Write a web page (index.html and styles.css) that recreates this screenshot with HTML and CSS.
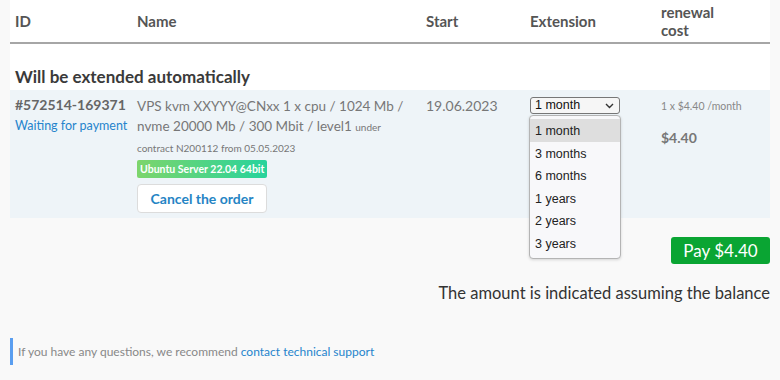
FILE: index.html
```html
<!DOCTYPE html>
<html lang="en">
<head>
  <meta charset="UTF-8">
  <meta name="viewport" content="width=device-width, initial-scale=1.0">
  <title>Orders</title>
  <link rel="stylesheet" href="styles.css">
</head>
<body>
  <div class="page">
    <table class="orders">
      <colgroup>
        <col class="col-id">
        <col class="col-name">
        <col class="col-start">
        <col class="col-ext">
        <col class="col-cost">
      </colgroup>
      <thead>
        <tr>
          <th>ID</th>
          <th>Name</th>
          <th>Start</th>
          <th>Extension</th>
          <th>renewal<br>cost</th>
        </tr>
      </thead>
      <tbody>
        <tr class="group-row">
          <td colspan="5">Will be extended automatically</td>
        </tr>
        <tr class="order-row">
          <td class="id-cell">
            <div class="order-id">#572514-169371</div>
            <a class="status" href="#">Waiting for payment</a>
          </td>
          <td>
            <div class="order-name">VPS kvm XXYYY@CNxx 1 x cpu / 1024 Mb / nvme 20000 Mb / 300 Mbit / level1 <span class="small">under contract N200112 from 05.05.2023</span></div>
            <div class="os-badge">Ubuntu Server 22.04 64bit</div>
            <button class="btn-cancel">Cancel the order</button>
          </td>
          <td class="start">19.06.2023</td>
          <td>
            <div class="select-wrap">
              <div class="select">
                <span>1 month</span>
                <svg width="9" height="6" viewBox="0 0 9 6"><path d="M1 1l3.5 3.5L8 1" fill="none" stroke="#333" stroke-width="1.4"/></svg>
              </div>
              <ul class="select-menu">
                <li class="active">1 month</li>
                <li>3 months</li>
                <li>6 months</li>
                <li>1 years</li>
                <li>2 years</li>
                <li>3 years</li>
              </ul>
            </div>
          </td>
          <td>
            <div class="per-month">1 x $4.40 /month</div>
            <div class="total">$4.40</div>
          </td>
        </tr>
      </tbody>
    </table>

    <div class="pay-row">
      <button class="btn-pay">Pay $4.40</button>
    </div>
    <p class="balance-note">The amount is indicated assuming the balance</p>

    <div class="help-note">If you have any questions, we recommend <a href="#">contact technical support</a></div>
  </div>
</body>
</html>
```

FILE: styles.css
```css
body {
  font-family: Lato, "Open Sans", sans-serif;
  margin: 0;
  padding: 0;
  background-color: #f9f9f9;
  color: #555;
}
.page {
  padding: 0 10px;
}
.orders {
  width: 100%;
  border-collapse: collapse;
  table-layout: fixed;
  background: #fff;
}
.col-id { width: 122px; }
.col-name { width: 289px; }
.col-start { width: 104px; }
.col-ext { width: 131px; }
.col-cost { width: 114px; }
.orders th {
  height: 42px;
  padding: 0 5px;
  text-align: left;
  vertical-align: middle;
  font-size: 15px;
  font-weight: bold;
  line-height: 18px;
  color: #555;
  border-bottom: 2px solid #a6a6a6;
}
.orders td {
  padding: 6px 5px 5px;
  vertical-align: top;
  font-size: 14px;
  line-height: 20px;
}
.group-row td {
  padding: 22px 5px 2px;
  font-size: 17px;
  font-weight: bold;
  color: #3a3a3a;
  line-height: 22px;
}
.order-row td {
  background: #eef4f8;
  color: #777;
}
.id-cell {
  white-space: nowrap;
}
.order-id {
  font-weight: bold;
  font-size: 14px;
  color: #666;
  line-height: 18px;
}
.status {
  display: block;
  color: #2584cc;
  font-size: 12.5px;
  text-decoration: none;
  margin-top: 2px;
}
.order-name {
  font-size: 13.5px;
  line-height: 20px;
  color: #777;
}
.order-name .small {
  font-size: 10px;
  line-height: 20px;
}
.os-badge {
  display: inline-block;
  margin-top: 2px;
  padding: 0 3px;
  height: 18px;
  line-height: 18px;
  font-size: 10.5px;
  font-weight: bold;
  color: #fff;
  border-radius: 2px;
  vertical-align: top;
  background: linear-gradient(90deg, #7dd56c, #27d39c);
}
.btn-cancel {
  display: block;
  margin-top: 6px;
  width: 130px;
  height: 29px;
  padding: 0;
  font-family: inherit;
  font-size: 14px;
  font-weight: bold;
  color: #2584c4;
  background: #fff;
  border: 1px solid #dcdcdc;
  border-radius: 4px;
  cursor: pointer;
}
.start {
  color: #777;
}
.select-wrap {
  position: relative;
  width: 90px;
  margin-top: 1px;
}
.select {
  display: flex;
  align-items: center;
  justify-content: space-between;
  height: 15px;
  padding: 0 5px 0 4px;
  border: 1px solid #777;
  border-radius: 3px;
  background: #f6f6f6;
  font-family: "Liberation Sans", Arial, sans-serif;
  font-size: 12.5px;
  line-height: 15px;
  color: #111;
}
.select-menu {
  position: absolute;
  top: 18px;
  left: -1px;
  width: 90px;
  margin: 0;
  padding: 3px 0 4px;
  list-style: none;
  background: #f8f8fa;
  border: 1px solid #b4b4b4;
  border-radius: 4px;
  box-shadow: 0 1px 3px rgba(0, 0, 0, 0.15);
  font-family: "Liberation Sans", Arial, sans-serif;
  font-size: 12.5px;
  color: #222;
  z-index: 2;
}
.select-menu li {
  height: 22.5px;
  line-height: 24px;
  padding-left: 5px;
}
.select-menu li.active {
  background: #dedede;
}
.per-month {
  font-size: 10.5px;
  color: #888;
  line-height: 14px;
  margin-top: 3px;
}
.total {
  margin-top: 15px;
  font-weight: bold;
  font-size: 14px;
  color: #777;
}
.pay-row {
  display: flex;
  justify-content: flex-end;
  margin-top: 19px;
}
.btn-pay {
  width: 99px;
  height: 27px;
  padding: 0;
  font-family: inherit;
  font-size: 17px;
  color: #fff;
  background-color: #0aa533;
  border: none;
  border-radius: 3px;
  cursor: pointer;
}
.balance-note {
  margin: 18px 0 0;
  text-align: right;
  font-size: 16.5px;
  line-height: 22px;
  color: #333;
}
.help-note {
  margin-top: 34px;
  padding: 6px 5px;
  border-left: 3px solid #5a9ef0;
  font-size: 12px;
  line-height: 15px;
  color: #888;
}
.help-note a {
  color: #2584cc;
  text-decoration: none;
}
```
